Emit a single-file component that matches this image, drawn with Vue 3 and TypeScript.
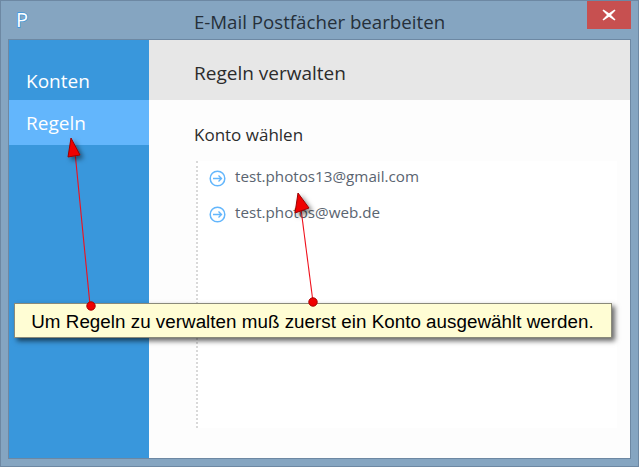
<template>
  <div class="window">
    <header class="titlebar">
      <span class="app-icon">P</span>
      <h1 class="title">E-Mail Postfächer bearbeiten</h1>
      <button class="close" aria-label="Schließen">
        <svg width="14" height="12" viewBox="0 0 14 12">
          <path d="M1.5 0.5 L7 4.2 L12.5 0.5 L13.5 1.5 L9 6 L13.5 10.5 L12.5 11.5 L7 7.8 L1.5 11.5 L0.5 10.5 L5 6 L0.5 1.5 Z" fill="#fff" />
        </svg>
      </button>
    </header>

    <div class="client">
      <nav class="sidebar">
        <a
          v-for="item in navItems"
          :key="item"
          class="nav-item"
          :class="{ active: item === activeItem }"
        >{{ item }}</a>
      </nav>

      <main class="content">
        <div class="page-header">Regeln verwalten</div>
        <div class="page-body">
          <h2 class="section-title">Konto wählen</h2>
          <ul class="accounts">
            <li v-for="account in accounts" :key="account" class="account">
              <svg class="arrow-icon" width="17" height="17" viewBox="0 0 17 17" fill="none" stroke="#63b6fc">
                <circle cx="8.5" cy="8.5" r="7.3" stroke-width="1.5" />
                <path d="M4 8.5 H12.5 M9.5 5.5 L12.5 8.5 L9.5 11.5" stroke-width="1.4" />
              </svg>
              <span>{{ account }}</span>
            </li>
          </ul>
        </div>
      </main>
    </div>

    <svg class="annotations" width="639" height="467" viewBox="0 0 639 467">
      <defs>
        <filter id="soft" x="-60%" y="-60%" width="220%" height="220%">
          <feDropShadow dx="3" dy="3" stdDeviation="2.5" flood-color="#000" flood-opacity="0.5" />
        </filter>
      </defs>
      <path d="M90 305 L75 152" stroke="#f0101c" stroke-width="1.1" />
      <path d="M313 302 L301 209" stroke="#f0101c" stroke-width="1.1" />
      <g filter="url(#soft)">
        <path d="M71 138 L80 155 L68 157 Z" fill="#f00000" stroke="#9a0000" stroke-width="1" />
        <path d="M298 193 L309 208 L295 213 Z" fill="#f00000" stroke="#9a0000" stroke-width="1" />
      </g>
    </svg>

    <div class="note">Um Regeln zu verwalten muß zuerst ein Konto ausgewählt werden.</div>

    <svg class="annotations dots" width="639" height="467" viewBox="0 0 639 467">
      <circle cx="91" cy="306" r="4.2" fill="#f00000" stroke="#a80000" />
      <circle cx="313" cy="302" r="4.2" fill="#f00000" stroke="#a80000" />
    </svg>
  </div>
</template>

<script setup lang="ts">
const navItems: string[] = ['Konten', 'Regeln']
const activeItem = 'Regeln'
const accounts: string[] = ['test.photos13@gmail.com', 'test.photos@web.de']
</script>

<style>
html,
body {
  margin: 0;
  overflow: hidden;
}
</style>

<style scoped>
.window {
  position: relative;
  box-sizing: border-box;
  width: 639px;
  height: 467px;
  display: flex;
  flex-direction: column;
  background: #85a5c1;
  border: 1px solid #6d88a3;
  font-family: "Open Sans", "Noto Sans", sans-serif;
  overflow: hidden;
}

.titlebar {
  position: relative;
  height: 38px;
  flex: none;
  display: flex;
  align-items: center;
  justify-content: center;
}

.app-icon {
  position: absolute;
  left: 15px;
  top: 7px;
  font-size: 20px;
  line-height: 24px;
  color: #fff;
  -webkit-text-stroke: 1.5px #3b96dc;
  paint-order: stroke fill;
}

.title {
  margin: 2px 0 0 0;
  font-size: 18.7px;
  font-weight: 400;
  color: #26303a;
}

.close {
  position: absolute;
  right: 7px;
  top: 0;
  width: 44px;
  height: 28px;
  padding: 0;
  border: 0;
  background: #c75050;
  display: flex;
  align-items: center;
  justify-content: center;
}

.client {
  flex: 1;
  display: flex;
  margin: 0 7px 7px 7px;
  border: 1px solid #6d88a3;
  min-height: 0;
}

.sidebar {
  width: 140px;
  flex: none;
  box-sizing: border-box;
  padding-top: 20px;
  background: #3997dc;
  display: flex;
  flex-direction: column;
}

.nav-item {
  height: 40px;
  padding-left: 17px;
  font-size: 19px;
  line-height: 42px;
  color: #fff;
}

.nav-item.active {
  height: 45px;
  line-height: 47px;
  background: #63b6fc;
}

.content {
  flex: 1;
  display: flex;
  flex-direction: column;
  min-width: 0;
  background: #fdfdfd;
}

.page-header {
  height: 60px;
  flex: none;
  box-sizing: border-box;
  padding-left: 45px;
  font-size: 19px;
  line-height: 66px;
  color: #2c2c2c;
  background: #e7e7e7;
}

.page-body {
  flex: 1;
  padding: 23px 13px 30px 45px;
  display: flex;
  flex-direction: column;
  min-height: 0;
}

.section-title {
  margin: 0 0 14px 0;
  font-size: 17px;
  font-weight: 400;
  line-height: 24px;
  color: #2c2c2c;
}

.accounts {
  flex: 1;
  margin: 0 0 0 2px;
  padding: 0 0 0 11px;
  list-style: none;
  background: #fff;
  border-left: 2px dotted #d9d9d9;
}

.account {
  box-sizing: border-box;
  height: 36px;
  padding-bottom: 4px;
  display: flex;
  align-items: center;
  gap: 9px;
  font-size: 15.2px;
  color: #5a6470;
}

.account span {
  margin-top: -3px;
}

.arrow-icon {
  flex: none;
  margin-top: 2px;
}

.annotations {
  position: absolute;
  left: -1px;
  top: -1px;
  pointer-events: none;
}

.note {
  position: absolute;
  left: 13px;
  top: 302px;
  box-sizing: border-box;
  width: 598px;
  height: 35px;
  padding-right: 1px;
  border: 1px solid #8a8a7a;
  background: #fffdd4;
  box-shadow: 3px 3px 5px rgba(0, 0, 0, 0.6);
  font-family: "Liberation Sans", Arial, sans-serif;
  font-size: 18.8px;
  letter-spacing: 0.03px;
  line-height: 35px;
  text-align: center;
  color: #000;
  white-space: nowrap;
}
</style>
